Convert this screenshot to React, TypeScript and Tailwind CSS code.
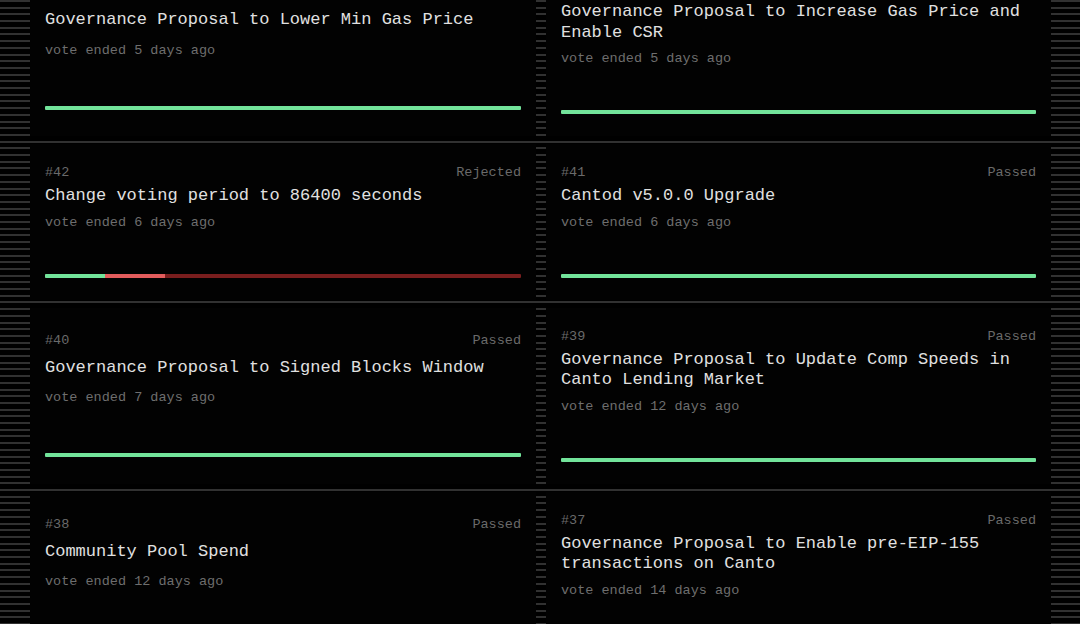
const proposals = [
  { id: 44, title: "Governance Proposal to Lower Min Gas Price", ended: "5 days ago", status: "Passed", yes: 100, no: 0 },
  { id: 43, title: "Governance Proposal to Increase Gas Price and Enable CSR", ended: "5 days ago", status: "Passed", yes: 100, no: 0 },
  { id: 42, title: "Change voting period to 86400 seconds", ended: "6 days ago", status: "Rejected", yes: 12.6, no: 12.6 },
  { id: 41, title: "Cantod v5.0.0 Upgrade", ended: "6 days ago", status: "Passed", yes: 100, no: 0 },
  { id: 40, title: "Governance Proposal to Signed Blocks Window", ended: "7 days ago", status: "Passed", yes: 100, no: 0 },
  { id: 39, title: "Governance Proposal to Update Comp Speeds in Canto Lending Market", ended: "12 days ago", status: "Passed", yes: 100, no: 0 },
  { id: 38, title: "Community Pool Spend", ended: "12 days ago", status: "Passed", yes: 100, no: 0 },
  { id: 37, title: "Governance Proposal to Enable pre-EIP-155 transactions on Canto", ended: "14 days ago", status: "Passed", yes: 100, no: 0 },
];

type Proposal = (typeof proposals)[number];

function VoteBar({ p }: { p: Proposal }) {
  const rejected = p.status === "Rejected";
  return (
    <div className={`flex h-[4px] w-full overflow-hidden rounded-[1px] ${rejected ? "bg-[#7a1e1e]" : "bg-[#72e39a]"}`}>
      {rejected && (
        <>
          <div className="h-full bg-[#72e39a]" style={{ width: `${p.yes}%` }} />
          <div className="h-full bg-[#e25c5c]" style={{ width: `${p.no}%` }} />
        </>
      )}
    </div>
  );
}

function Card({ p }: { p: Proposal }) {
  // shorter cards in a row spread their spare height evenly
  return (
    <div className="flex flex-col justify-evenly bg-[#020202] px-[15px] pt-[21px] pb-[22px]">
      <div className="flex items-center justify-between text-[13.5px] leading-[16px] text-[#6a6a6a]">
        <span>#{p.id}</span>
        <span>{p.status}</span>
      </div>
      <div className="mt-[5px] text-[17px] leading-[20.5px] text-[#e0e0e0]">{p.title}</div>
      <div className="mt-[8px] text-[13.5px] leading-[16px] text-[#6e6e6e]">vote ended {p.ended}</div>
      <div className="mt-[43px]">
        <VoteBar p={p} />
      </div>
    </div>
  );
}

export default function App() {
  return (
    <div
      className="h-[624px] w-full overflow-hidden bg-[repeating-linear-gradient(to_bottom,#313131_0px,#313131_2px,#000_2px,#000_6.7px)]"
      style={{ fontFamily: '"Liberation Mono", "DejaVu Sans Mono", monospace' }}
    >
      <div className="-mt-[40px] grid grid-cols-[506px_505px] gap-x-[10px] gap-y-[8px] pl-[30px]">
        {proposals.map((p) => (
          <Card key={p.id} p={p} />
        ))}
      </div>
    </div>
  );
}
